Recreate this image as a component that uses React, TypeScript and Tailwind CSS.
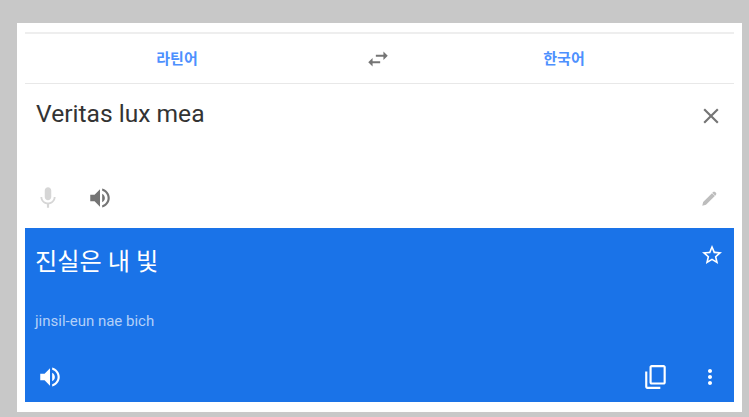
import React from 'react';

const Icon = ({ d, className }: { d: string; className: string }) => (
  <svg viewBox="0 0 24 24" fill="currentColor" className={className}>
    <path d={d} />
  </svg>
);

const SPEAKER =
  'M3 9v6h4l5 5V4L7 9H3zm13.5 3c0-1.77-1.02-3.29-2.5-4.03v8.05c1.48-.73 2.5-2.25 2.5-4.02zM14 3.23v2.06c2.89.86 5 3.54 5 6.71s-2.11 5.85-5 6.71v2.06c4.01-.91 7-4.49 7-8.77s-2.99-7.86-7-8.77z';
const MIC =
  'M12 14c1.66 0 2.99-1.34 2.99-3L15 5c0-1.66-1.34-3-3-3S9 3.34 9 5v6c0 1.66 1.34 3 3 3zm5.3-3c0 3-2.54 5.1-5.3 5.1S6.7 14 6.7 11H5c0 3.41 2.72 6.23 6 6.72V21h2v-3.28c3.28-.48 6-3.3 6-6.72h-1.7z';
const SWAP = 'M6.99 11L3 15l3.99 4v-3H14v-2H6.99v-3zM21 9l-3.99-4v3H10v2h7.01v3L21 9z';
const CLOSE =
  'M19 6.41L17.59 5 12 10.59 6.41 5 5 6.41 10.59 12 5 17.59 6.41 19 12 13.41 17.59 19 19 17.59 13.41 12z';
// slimmer than the stock edit glyph
const PENCIL = 'M3 21l1.2-5L16 4.2l3.8 3.8L8 19.8 3 21zM17.4 2.8c.8-.8 2-.8 2.8 0l1 1c.8.8.8 2 0 2.8l-1 1L16.4 3.8l1-1z';
const STAR =
  'M22 9.24l-7.19-.62L12 2 9.19 8.63 2 9.24l5.46 4.73L5.82 21 12 17.27 18.18 21l-1.63-7.03L22 9.24zM12 15.4l-3.76 2.27 1-4.28-3.32-2.88 4.38-.38L12 6.1l1.71 4.04 4.38.38-3.32 2.88 1 4.28L12 15.4z';
const COPY =
  'M16 1H4c-1.1 0-2 .9-2 2v14h2V3h12V1zm3 4H8c-1.1 0-2 .9-2 2v14c0 1.1.9 2 2 2h11c1.1 0 2-.9 2-2V7c0-1.1-.9-2-2-2zm0 16H8V7h11v14z';
const DOTS =
  'M12 8c1.1 0 2-.9 2-2s-.9-2-2-2-2 .9-2 2 .9 2 2 2zm0 2c-1.1 0-2 .9-2 2s.9 2 2 2 2-.9 2-2-.9-2-2-2zm0 6c-1.1 0-2 .9-2 2s.9 2 2 2 2-.9 2-2-.9-2-2-2z';

const App = () => {
  return (
    <div className="h-[417px] w-[749px] overflow-hidden bg-[#c8c8c8] pl-[17px] pr-[7px] pt-[23px] font-['Roboto','Noto_Sans_CJK_KR',sans-serif]">
      <div className="h-[389px] w-[725px] bg-white px-2 pt-[9px]">
        {/* Language bar */}
        <div className="flex h-[52px] items-center border-b border-t-2 border-b-[#e8e8e8] border-t-[#eeeeee] pt-[1px]">
          <div className="w-[304px] text-center text-[15px] font-bold text-[#4d90fe]">라틴어</div>
          <div className="flex w-[98px] justify-center">
            <Icon d={SWAP} className="h-[26px] w-[26px] text-[#757575]" />
          </div>
          <div className="w-[274px] text-center text-[15px] font-bold text-[#4d90fe]">한국어</div>
        </div>

        {/* Source text */}
        <div className="flex h-[144px] flex-col">
          <div className="flex items-start justify-between pl-[11px] pr-[10px] pt-[14px]">
            <div className="text-[24.6px] leading-[32px] text-[#333333]">Veritas lux mea</div>
            <Icon d={CLOSE} className="mt-[5px] h-[26px] w-[26px] text-[#757575]" />
          </div>
          <div className="mt-auto flex items-center pb-[17px] pl-[10px] pr-[16px]">
            <Icon d={MIC} className="h-[26px] w-[26px] text-[#d6d6d6]" />
            <Icon d={SPEAKER} className="ml-[26px] h-[26px] w-[26px] text-[#757575]" />
            <Icon d={PENCIL} className="ml-auto mt-[2px] h-[18px] w-[18px] text-[#bdbdbd]" />
          </div>
        </div>

        {/* Translation */}
        <div className="flex h-[174px] flex-col bg-[#1a73e8] text-white">
          <div className="flex items-start justify-between pl-[10px] pr-[10px] pt-[15px]">
            <div className="pt-[3px] text-[24.2px] leading-[32px]">진실은 내 빛</div>
            <Icon d={STAR} className="h-6 w-6" />
          </div>
          <div className="pl-[10px] pt-[33px] text-[15px] leading-[20px] text-[#b3d0f8]">jinsil-eun nae bich</div>
          <div className="mt-auto flex items-center pb-[12px] pl-[12px] pr-[12px]">
            <Icon d={SPEAKER} className="h-[26px] w-[26px]" />
            <Icon d={COPY} className="ml-auto h-[26px] w-[26px] -scale-y-100" />
            <Icon d={DOTS} className="ml-[29px] h-6 w-6" />
          </div>
        </div>
      </div>
    </div>
  );
};

export default App;
